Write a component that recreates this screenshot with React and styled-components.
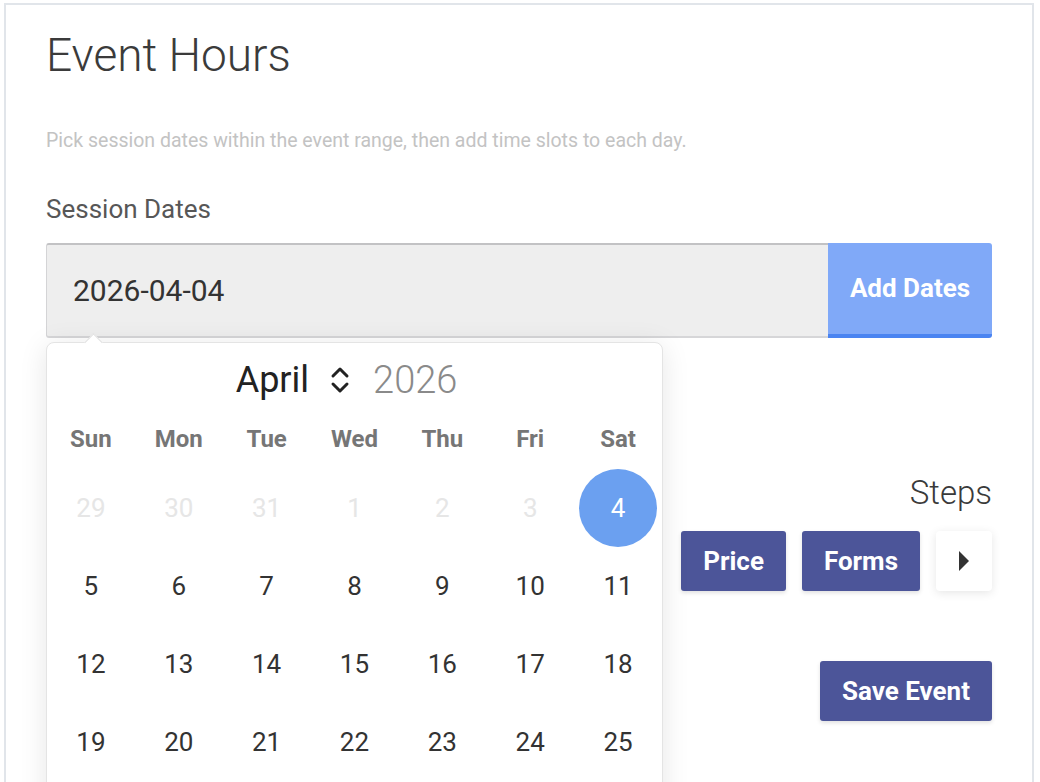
import React from 'react'
import styled, { createGlobalStyle } from 'styled-components'

const Global = createGlobalStyle`
  html, body {
    margin: 0;
    padding: 0;
    background: #ffffff;
    font-family: Roboto, "Noto Sans", Arial, sans-serif;
    overflow: hidden;
  }
  * { box-sizing: border-box; }
`;

const Card = styled.div`
  margin: 3px 6px 0 4px;
  height: 800px;
  border: 2px solid #e1e5ea;
  border-bottom: none;
  padding: 18px 40px 0 40px;
  background: #fff;
`;

const Title = styled.h1`
  margin: 0;
  font-size: 46px;
  font-weight: 300;
  line-height: 64px;
  color: #3b3b3b;
`;

const Hint = styled.p`
  margin: 42px 0 0 0;
  font-size: 19.5px;
  line-height: 24px;
  color: #c3c3c3;
`;

const Label = styled.div`
  margin-top: 41px;
  font-size: 26px;
  line-height: 30px;
  color: #575757;
`;

const InputWrap = styled.div`
  position: relative;
  margin-top: 19px;
`;

const InputGroup = styled.div`
  display: flex;
  height: 95px;
`;

const DateInput = styled.div`
  flex: 1;
  display: flex;
  align-items: center;
  padding-left: 26px;
  background: #eeeeee;
  border-top: 2px solid #c2c2c4;
  border-left: 1px solid #d4d4d6;
  border-bottom: 2px solid #d6d6d8;
  border-radius: 3px 0 0 3px;
  font-size: 30px;
  color: #333;
`;

const AddButton = styled.button`
  width: 164px;
  border: none;
  border-bottom: 4px solid #4a84f1;
  border-radius: 0 3px 3px 0;
  background: #80a9f8;
  color: #fff;
  font-family: inherit;
  font-size: 26px;
  font-weight: 700;
  padding: 0 0 2px 0;
`;

const Popup = styled.div`
  position: absolute;
  top: calc(100% + 4px);
  left: 0;
  width: 617px;
  background: #fff;
  border: 1px solid #e4e4e4;
  border-radius: 8px;
  box-shadow: 0 4px 28px rgba(0, 0, 0, 0.1);
  z-index: 5;

  &::before {
    content: '';
    position: absolute;
    top: -7px;
    left: 40px;
    width: 12px;
    height: 12px;
    background: #fff;
    border-left: 1px solid #e0e0e0;
    border-top: 1px solid #e0e0e0;
    transform: rotate(45deg);
  }
`;

const MonthHeader = styled.div`
  height: 76px;
  display: flex;
  align-items: center;
  justify-content: center;
  gap: 22px;
  padding: 0 16px 3px 0;
`;

const Month = styled.span`
  color: #222;
  font-size: 36px;
  font-weight: 400;
  display: flex;
  align-items: center;
  gap: 20px;
`;

const Year = styled.span`
  color: #8a8a8a;
  font-size: 38px;
  font-weight: 300;
`;

const Grid = styled.div`
  display: grid;
  grid-template-columns: repeat(7, 1fr);
`;

const WeekDay = styled.div`
  height: 40px;
  display: flex;
  align-items: center;
  justify-content: center;
  font-size: 24px;
  font-weight: 700;
  color: #767676;
`;

const Days = styled(Grid)`
  margin-top: 10px;
`;

const Day = styled.div`
  height: 78px;
  display: flex;
  align-items: center;
  justify-content: center;
  font-size: 26px;
  color: ${p => (p.$muted ? '#e6e6e6' : p.$selected ? '#fff' : '#333')};

  span {
    width: 78px;
    height: 78px;
    border-radius: 50%;
    display: flex;
    align-items: center;
    justify-content: center;
    background: ${p => (p.$selected ? '#6ba0f0' : 'transparent')};
  }
`;

const Lower = styled.div`
  display: flex;
  flex-direction: column;
  align-items: flex-end;
  margin-top: 135px;
`;

const StepsTitle = styled.div`
  font-size: 33px;
  font-weight: 300;
  color: #3a3a3a;
  line-height: 40px;
`;

const StepsNav = styled.div`
  display: flex;
  gap: 16px;
  margin-top: 18px;
`;

const StepButton = styled.button`
  height: 60px;
  padding: 0 22px;
  border: none;
  border-radius: 3px;
  background: #4c5599;
  color: #fff;
  font-family: inherit;
  font-size: 26px;
  font-weight: 700;
  box-shadow: 0 2px 4px rgba(0, 0, 0, 0.12);
`;

const ArrowButton = styled.button`
  width: 56px;
  height: 60px;
  border: none;
  border-radius: 4px;
  background: #fff;
  box-shadow: 0 2px 10px rgba(0, 0, 0, 0.1);
  display: flex;
  align-items: center;
  justify-content: center;
  padding: 0;
`;

const SaveButton = styled(StepButton)`
  margin-top: 70px;
`;

const weekDays = ['Sun', 'Mon', 'Tue', 'Wed', 'Thu', 'Fri', 'Sat']

const days = [
  { n: 29, muted: true }, { n: 30, muted: true }, { n: 31, muted: true },
  { n: 1, muted: true }, { n: 2, muted: true }, { n: 3, muted: true },
  { n: 4, selected: true },
  ...Array.from({ length: 26 }, (_, i) => ({ n: i + 5 })),
  { n: 1, muted: true }, { n: 2, muted: true },
]

const UpDown = () => (
  <svg width="22" height="30" viewBox="0 0 22 30" fill="none" stroke="#222" strokeWidth="3" strokeLinecap="round" strokeLinejoin="round">
    <path d="M4 11 L11 4 L18 11" />
    <path d="M4 19 L11 26 L18 19" />
  </svg>
)

const Caret = () => (
  <svg width="12" height="20" viewBox="0 0 12 20">
    <path d="M1 0 L11 10 L1 20 Z" fill="#333" />
  </svg>
)

const App = () => {
  return (
    <>
      <Global />
      <Card>
        <Title>Event Hours</Title>
        <Hint>Pick session dates within the event range, then add time slots to each day.</Hint>
        <Label>Session Dates</Label>
        <InputWrap>
          <InputGroup>
            <DateInput>2026-04-04</DateInput>
            <AddButton>Add Dates</AddButton>
          </InputGroup>
          <Popup>
            <MonthHeader>
              <Month>April <UpDown /></Month>
              <Year>2026</Year>
            </MonthHeader>
            <Grid>
              {weekDays.map(d => <WeekDay key={d}>{d}</WeekDay>)}
            </Grid>
            <Days>
              {days.map((d, i) => (
                <Day key={i} $muted={d.muted} $selected={d.selected}>
                  <span>{d.n}</span>
                </Day>
              ))}
            </Days>
          </Popup>
        </InputWrap>
        <Lower>
          <StepsTitle>Steps</StepsTitle>
          <StepsNav>
            <StepButton>Price</StepButton>
            <StepButton>Forms</StepButton>
            <ArrowButton><Caret /></ArrowButton>
          </StepsNav>
          <SaveButton>Save Event</SaveButton>
        </Lower>
      </Card>
    </>
  )
}

export default App
